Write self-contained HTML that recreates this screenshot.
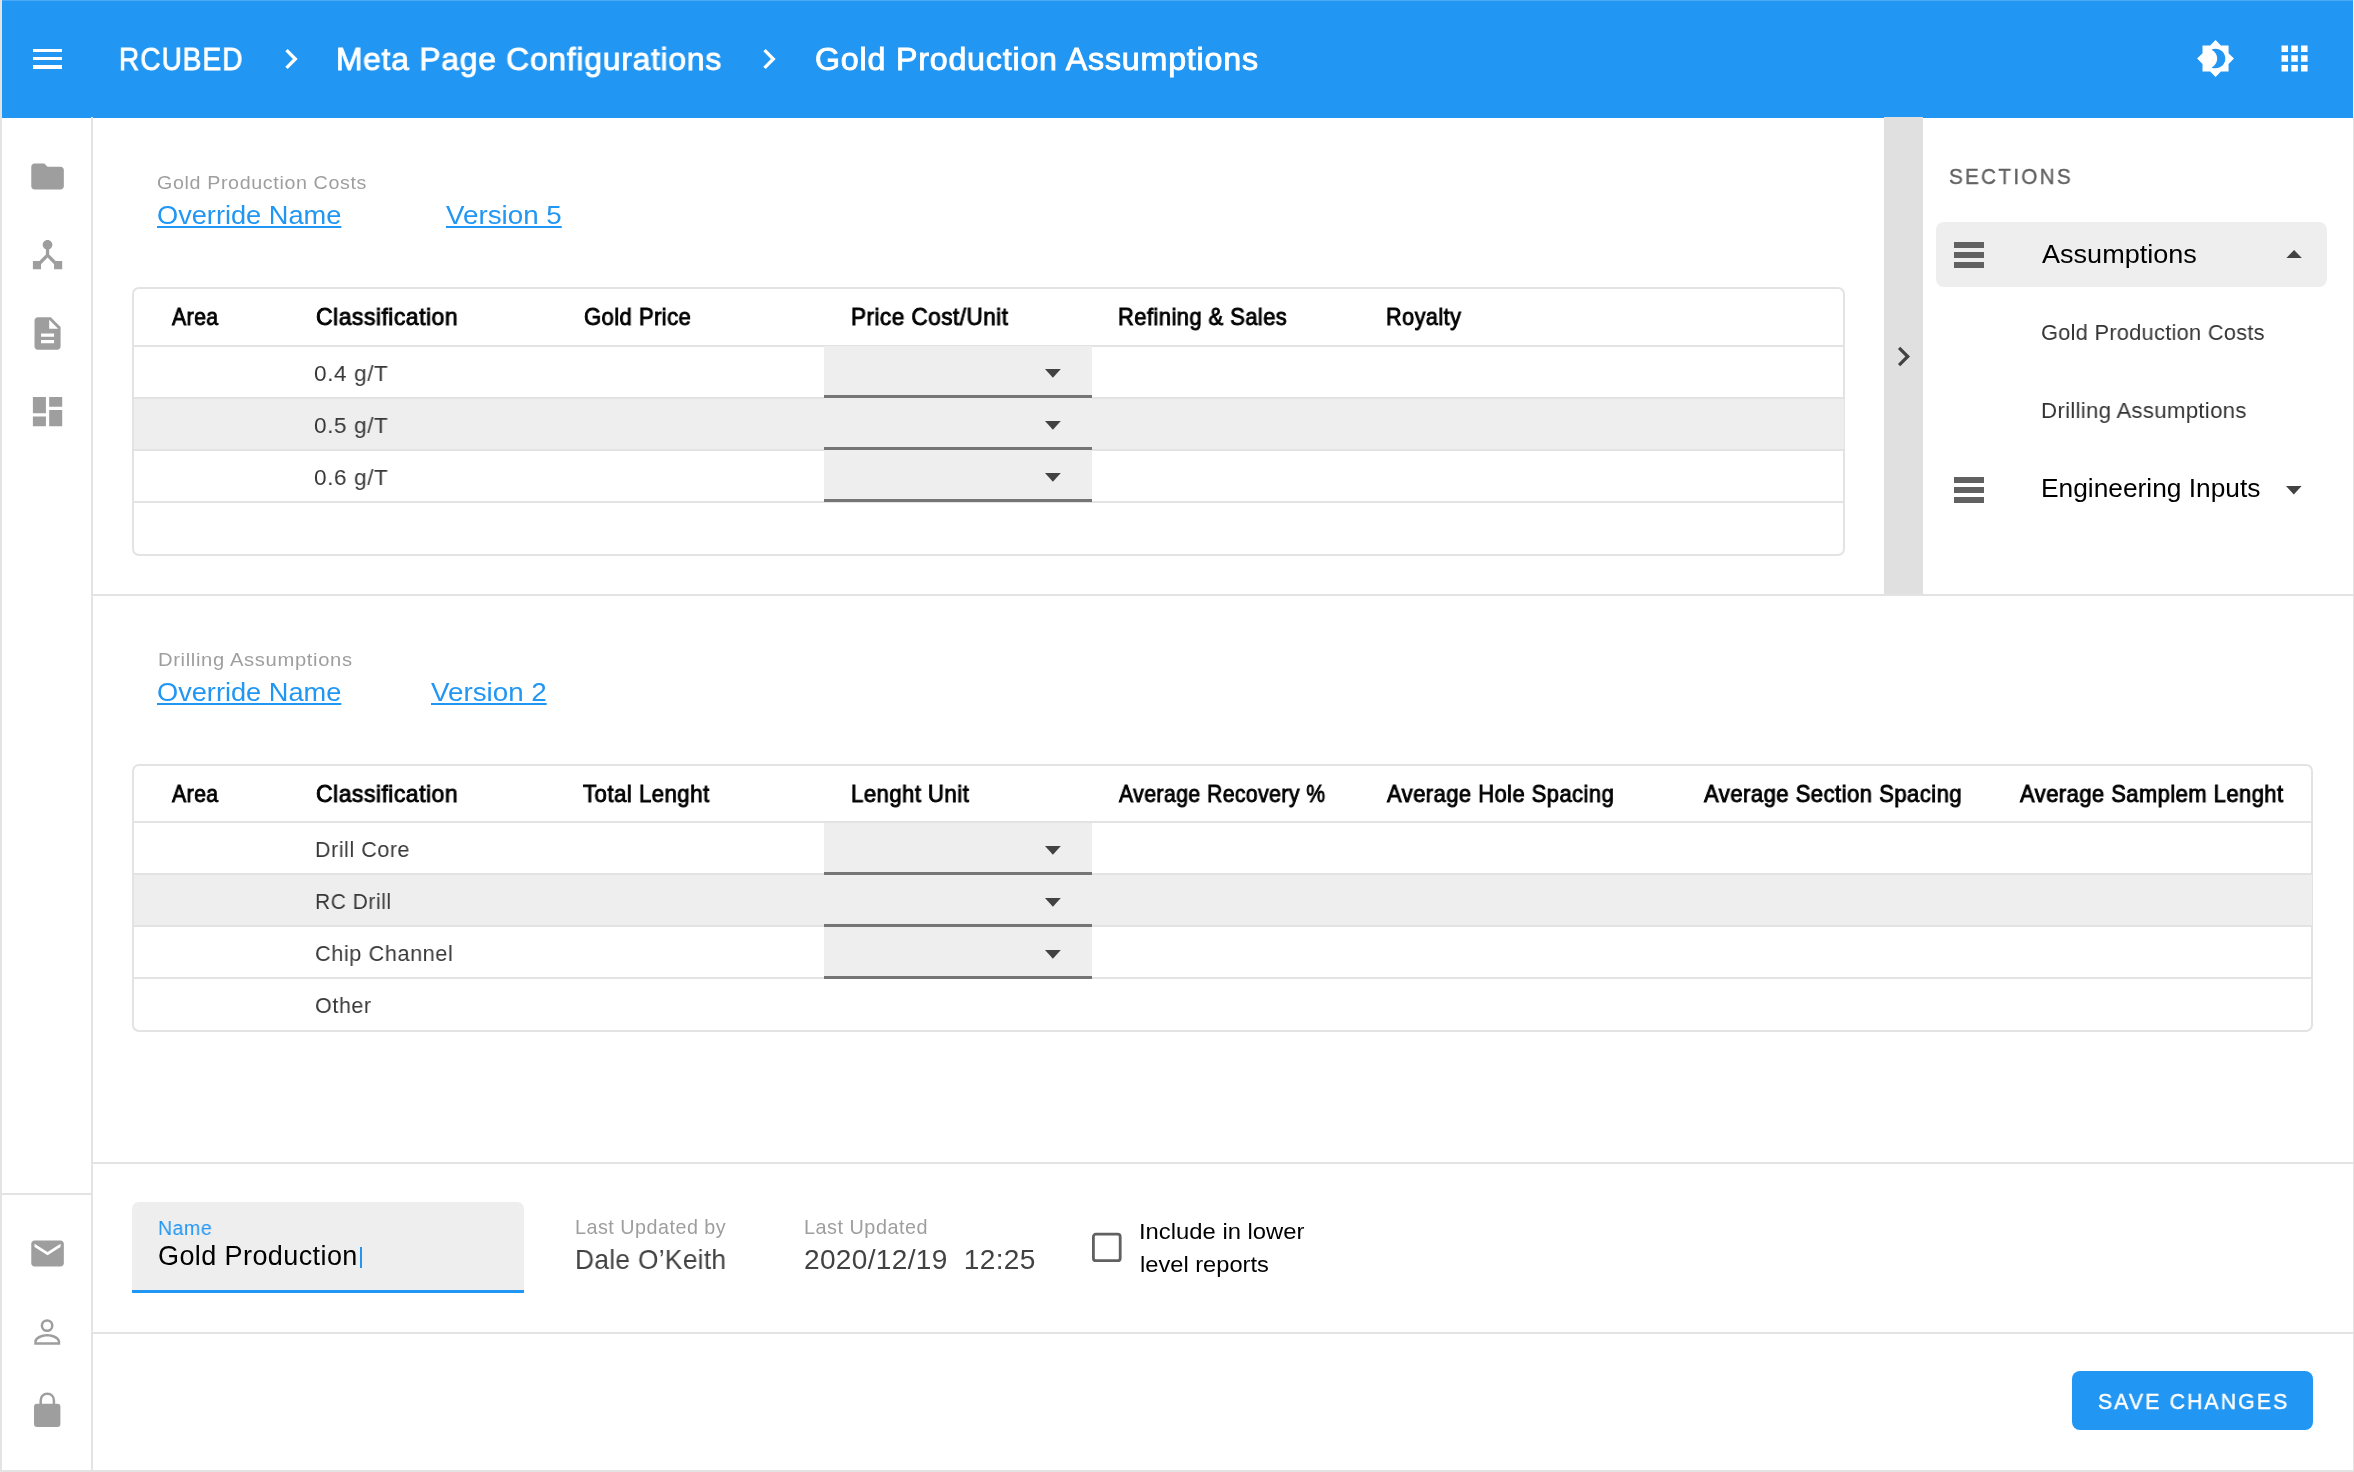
<!DOCTYPE html>
<html><head><meta charset="utf-8"><title>Gold Production Assumptions</title>
<style>
html,body{margin:0;padding:0;width:2354px;height:1472px;overflow:hidden;background:#fff;}
body{position:relative;font-family:"Liberation Sans",sans-serif;}
.t{position:absolute;white-space:nowrap;line-height:1;transform-origin:0 0;will-change:transform;}
.r{position:absolute;display:block;}
</style></head><body>
<div class="r" style="left:0px;top:0px;width:2353px;height:117.5px;background:#2196f3;"></div>
<div class="r" style="left:0px;top:0px;width:2353px;height:1px;background:#4ba9f5;"></div>
<div class="r" style="left:0px;top:0px;width:1.7px;height:1472px;background:#e3e3e3;"></div>
<div class="r" style="left:2352.6px;top:117px;width:1.4px;height:1355px;background:#e3e3e3;"></div>
<div class="r" style="left:0px;top:1470.3px;width:2354px;height:1.7px;background:#e3e3e3;"></div>
<div class="r" style="left:32.8px;top:49.0px;width:29.2px;height:3.4px;background:#fff;"></div>
<div class="r" style="left:32.8px;top:57.1px;width:29.2px;height:3.4px;background:#fff;"></div>
<div class="r" style="left:32.8px;top:65.2px;width:29.2px;height:3.4px;background:#fff;"></div>
<div class="t" style="left:118.99px;top:43.04px;font-size:32.20px;color:#fff;font-weight:400;letter-spacing:1.2px;-webkit-text-stroke:0.9px #fff;transform:scaleX(0.8694);">RCUBED</div>
<div class="t" style="left:335.98px;top:43.04px;font-size:32.20px;color:#fff;font-weight:400;letter-spacing:0.8px;-webkit-text-stroke:0.9px #fff;transform:scaleX(0.9863);">Meta Page Configurations</div>
<div class="t" style="left:814.71px;top:43.04px;font-size:32.20px;color:#fff;font-weight:400;letter-spacing:0.8px;-webkit-text-stroke:0.9px #fff;">Gold Production Assumptions</div>
<svg class="r" style="left:270.7px;top:39.0px" width="40.0" height="40.0" viewBox="0 0 24 24"><path fill="#fff" d="M10 6L8.59 7.41 13.17 12l-4.58 4.59L10 18l6-6z"/></svg>
<svg class="r" style="left:748.7px;top:39.0px" width="40.0" height="40.0" viewBox="0 0 24 24"><path fill="#fff" d="M10 6L8.59 7.41 13.17 12l-4.58 4.59L10 18l6-6z"/></svg>
<svg class="r" style="left:2195.9px;top:39.3px" width="39.1" height="39.1" viewBox="0 0 24 24"><path fill="#fff" d="M20 8.69V4h-4.69L12 .69 8.69 4H4v4.69L.69 12 4 15.31V20h4.69L12 23.31 15.31 20H20v-4.69L23.31 12 20 8.69zM12 18c-.89 0-1.74-.2-2.5-.55C11.56 16.5 13 14.42 13 12s-1.44-4.5-3.5-5.45C10.26 6.2 11.11 6 12 6c3.31 0 6 2.69 6 6s-2.69 6-6 6z"/></svg>
<svg class="r" style="left:2274.5px;top:39.3px" width="39.1" height="39.1" viewBox="0 0 24 24"><path fill="#fff" d="M4 8h4V4H4v4zm6 12h4v-4h-4v4zm-6 0h4v-4H4v4zm0-6h4v-4H4v4zm6 0h4v-4h-4v4zm6-10v4h4V4h-4zm-6 4h4V4h-4v4zm6 6h4v-4h-4v4zm0 6h4v-4h-4v4z"/></svg>
<div class="r" style="left:91.2px;top:117px;width:1.8px;height:1353px;background:#e3e3e3;"></div>
<div class="r" style="left:1.7px;top:1193.2px;width:89.5px;height:2px;background:#e3e3e3;"></div>
<svg class="r" style="left:27.7px;top:156.5px" width="39.1" height="39.1" viewBox="0 0 24 24"><path fill="#9e9e9e" d="M10 4H4c-1.1 0-1.99.9-1.99 2L2 18c0 1.1.9 2 2 2h16c1.1 0 2-.9 2-2V8c0-1.1-.9-2-2-2h-8l-2-2z"/></svg>
<svg class="r" style="left:27.7px;top:235.1px" width="39.1" height="39.1" viewBox="0 0 24 24"><path fill="#9e9e9e" d="M17 16l-4-4V8.82C14.16 8.4 15 7.3 15 6c0-1.66-1.34-3-3-3S9 4.34 9 6c0 1.3.84 2.4 2 2.82V12l-4 4H3v5h5v-3.05l4-4.2 4 4.2V21h5v-5h-4z"/></svg>
<svg class="r" style="left:27.5px;top:313.7px" width="39.1" height="39.1" viewBox="0 0 24 24"><path fill="#9e9e9e" d="M14 2H6c-1.1 0-1.99.9-1.99 2L4 20c0 1.1.89 2 1.99 2H18c1.1 0 2-.9 2-2V8l-6-6zm2 16H8v-2h8v2zm0-4H8v-2h8v2zm-3-5V3.5L18.5 9H13z"/></svg>
<svg class="r" style="left:27.7px;top:392.1px" width="39.1" height="39.1" viewBox="0 0 24 24"><path fill="#9e9e9e" d="M3 13h8V3H3v10zm0 8h8v-6H3v6zm10 0h8V11h-8v10zm0-18v6h8V3h-8z"/></svg>
<svg class="r" style="left:27.8px;top:1234.2px" width="39.1" height="39.1" viewBox="0 0 24 24"><path fill="#9e9e9e" d="M20 4H4c-1.1 0-1.99.9-1.99 2L2 18c0 1.1.9 2 2 2h16c1.1 0 2-.9 2-2V6c0-1.1-.9-2-2-2zm0 4l-8 5-8-5V6l8 5 8-5v2z"/></svg>
<svg class="r" style="left:30px;top:1315px" width="34" height="34" viewBox="0 0 34 34"><circle cx="17.1" cy="10.6" r="5.2" fill="none" stroke="#9e9e9e" stroke-width="2.5"/><path fill="#9e9e9e" fill-rule="evenodd" d="M4.3 29.8V26.5C4.3 22 11 19 17.2 19S30.2 22 30.2 26.5V29.8Z M6.8 27.3V26.6C6.8 24.2 12 21.5 17.2 21.5S27.7 24.2 27.7 26.6V27.3Z"/></svg>
<svg class="r" style="left:30px;top:1388px" width="34" height="42" viewBox="0 0 34 42"><path d="M10.7 16.5V12.6C10.7 8.3 13.5 5.85 17.3 5.85S23.9 8.3 23.9 12.6V16.5" fill="none" stroke="#9e9e9e" stroke-width="2.5"/><rect x="4" y="15.7" width="26.4" height="23.2" rx="3" fill="#9e9e9e"/></svg>
<div class="r" style="left:93px;top:593.8px;width:2260px;height:1.9px;background:#e3e3e3;"></div>
<div class="r" style="left:93px;top:1162.2px;width:2260px;height:1.9px;background:#e3e3e3;"></div>
<div class="r" style="left:93px;top:1332.3px;width:2260px;height:1.9px;background:#e3e3e3;"></div>
<div class="r" style="left:1884px;top:117px;width:39px;height:477px;background:#e0e0e0;"></div>
<svg class="r" style="left:1884.0px;top:336.8px" width="39.0" height="39.0" viewBox="0 0 24 24"><path fill="#424242" d="M10 6L8.59 7.41 13.17 12l-4.58 4.59L10 18l6-6z"/></svg>
<div class="t" style="left:1949.47px;top:165.72px;font-size:21.60px;color:#616161;font-weight:400;letter-spacing:2.4px;-webkit-text-stroke:0.35px #616161;transform:scaleX(0.9570);">SECTIONS</div>
<div class="r" style="left:1936px;top:222px;width:390.5px;height:65px;background:#eeeeee;border-radius:8px;"></div>
<div class="r" style="left:1954.3px;top:241.9px;width:29.5px;height:6px;background:#616161;"></div>
<div class="r" style="left:1954.3px;top:251.70000000000002px;width:29.5px;height:6px;background:#616161;"></div>
<div class="r" style="left:1954.3px;top:261.5px;width:29.5px;height:6px;background:#616161;"></div>
<div class="t" style="left:2041.92px;top:240.82px;font-size:26.21px;color:#000;font-weight:400;letter-spacing:0.0px;transform:scaleX(1.0324);">Assumptions</div>
<svg class="r" style="left:2285.8px;top:249.9px" width="16.2" height="8.4"><path fill="#424242" d="M0 8.4L8.1 0L16.2 8.4Z"/></svg>
<div class="t" style="left:2041.20px;top:321.57px;font-size:22.48px;color:#333333;font-weight:400;letter-spacing:0.3px;transform:scaleX(0.9687);">Gold Production Costs</div>
<div class="t" style="left:2041.24px;top:400.09px;font-size:22.34px;color:#333333;font-weight:400;letter-spacing:0.3px;transform:scaleX(0.9937);">Drilling Assumptions</div>
<div class="r" style="left:1954.3px;top:477px;width:29.5px;height:6px;background:#616161;"></div>
<div class="r" style="left:1954.3px;top:486.8px;width:29.5px;height:6px;background:#616161;"></div>
<div class="r" style="left:1954.3px;top:496.6px;width:29.5px;height:6px;background:#616161;"></div>
<div class="t" style="left:2040.50px;top:476.48px;font-size:25.66px;color:#000;font-weight:400;letter-spacing:0.0px;transform:scaleX(1.0255);">Engineering Inputs</div>
<svg class="r" style="left:2286.1px;top:486.4px" width="15.6" height="8.4"><path fill="#424242" d="M0 0L7.8 8.4L15.6 0Z"/></svg>
<div class="t" style="left:157.36px;top:173.84px;font-size:18.62px;color:#9e9e9e;font-weight:400;letter-spacing:0.6px;transform:scaleX(1.0567);">Gold Production Costs</div>
<div class="t" style="left:157.36px;top:201.58px;font-size:26.48px;color:#2196f3;font-weight:400;letter-spacing:0.0px;transform:scaleX(1.0271);text-decoration:underline;text-decoration-thickness:1.7px;text-underline-offset:2.3px;">Override Name</div>
<div class="t" style="left:446.00px;top:201.58px;font-size:26.48px;color:#2196f3;font-weight:400;letter-spacing:0.0px;transform:scaleX(1.0486);text-decoration:underline;text-decoration-thickness:1.7px;text-underline-offset:2.3px;">Version 5</div>
<div class="r" style="left:132px;top:287.4px;width:1713px;height:268.2px;border:2px solid #e3e3e3;box-sizing:border-box;border-radius:7px;"></div>
<div class="r" style="left:134px;top:397.6px;width:1710px;height:52.0px;background:#eeeeee;"></div>
<div class="r" style="left:134px;top:344.6px;width:1710px;height:2px;background:#e3e3e3;"></div>
<div class="r" style="left:134px;top:396.6px;width:1710px;height:2px;background:#e3e3e3;"></div>
<div class="r" style="left:134px;top:448.6px;width:1710px;height:2px;background:#e3e3e3;"></div>
<div class="r" style="left:134px;top:500.6px;width:1710px;height:2px;background:#e3e3e3;"></div>
<div class="t" style="left:171.59px;top:306.06px;font-size:23.20px;color:#000;font-weight:400;letter-spacing:0.5px;-webkit-text-stroke:0.9px #000;transform:scaleX(0.9138);">Area</div>
<div class="t" style="left:315.61px;top:306.06px;font-size:23.20px;color:#000;font-weight:400;letter-spacing:0.5px;-webkit-text-stroke:0.9px #000;transform:scaleX(0.9893);">Classification</div>
<div class="t" style="left:583.51px;top:306.06px;font-size:23.20px;color:#000;font-weight:400;letter-spacing:0.5px;-webkit-text-stroke:0.9px #000;transform:scaleX(0.9475);">Gold Price</div>
<div class="t" style="left:850.70px;top:306.06px;font-size:23.20px;color:#000;font-weight:400;letter-spacing:0.5px;-webkit-text-stroke:0.9px #000;transform:scaleX(0.9706);">Price Cost/Unit</div>
<div class="t" style="left:1117.74px;top:306.06px;font-size:23.20px;color:#000;font-weight:400;letter-spacing:0.5px;-webkit-text-stroke:0.9px #000;transform:scaleX(0.9432);">Refining &amp; Sales</div>
<div class="t" style="left:1385.72px;top:306.06px;font-size:23.20px;color:#000;font-weight:400;letter-spacing:0.5px;-webkit-text-stroke:0.9px #000;transform:scaleX(0.9327);">Royalty</div>
<div class="t" style="left:314.36px;top:361.78px;font-size:22.70px;color:#383838;font-weight:400;letter-spacing:0.6px;transform:scaleX(0.9942);">0.4 g/T</div>
<div class="t" style="left:314.36px;top:413.78px;font-size:22.70px;color:#383838;font-weight:400;letter-spacing:0.6px;transform:scaleX(0.9942);">0.5 g/T</div>
<div class="t" style="left:314.36px;top:465.78px;font-size:22.70px;color:#383838;font-weight:400;letter-spacing:0.6px;transform:scaleX(0.9942);">0.6 g/T</div>
<div class="r" style="left:824.3px;top:345.9px;width:267.7px;height:49.4px;background:#eeeeee;"></div>
<div class="r" style="left:824.3px;top:395.3px;width:267.7px;height:3.1px;background:#757575;"></div>
<svg class="r" style="left:1045.4px;top:369.4px" width="15.8" height="8.7"><path fill="#424242" d="M0 0L7.9 8.7L15.8 0Z"/></svg>
<div class="r" style="left:824.3px;top:397.9px;width:267.7px;height:49.4px;background:#eeeeee;"></div>
<div class="r" style="left:824.3px;top:447.3px;width:267.7px;height:3.1px;background:#757575;"></div>
<svg class="r" style="left:1045.4px;top:421.4px" width="15.8" height="8.7"><path fill="#424242" d="M0 0L7.9 8.7L15.8 0Z"/></svg>
<div class="r" style="left:824.3px;top:449.9px;width:267.7px;height:49.4px;background:#eeeeee;"></div>
<div class="r" style="left:824.3px;top:499.3px;width:267.7px;height:3.1px;background:#757575;"></div>
<svg class="r" style="left:1045.4px;top:473.4px" width="15.8" height="8.7"><path fill="#424242" d="M0 0L7.9 8.7L15.8 0Z"/></svg>
<div class="t" style="left:157.75px;top:650.84px;font-size:18.62px;color:#9e9e9e;font-weight:400;letter-spacing:0.6px;transform:scaleX(1.0839);">Drilling Assumptions</div>
<div class="t" style="left:157.36px;top:678.58px;font-size:26.48px;color:#2196f3;font-weight:400;letter-spacing:0.0px;transform:scaleX(1.0271);text-decoration:underline;text-decoration-thickness:1.7px;text-underline-offset:2.3px;">Override Name</div>
<div class="t" style="left:431.00px;top:678.58px;font-size:26.48px;color:#2196f3;font-weight:400;letter-spacing:0.0px;transform:scaleX(1.0486);text-decoration:underline;text-decoration-thickness:1.7px;text-underline-offset:2.3px;">Version 2</div>
<div class="r" style="left:132px;top:764px;width:2181px;height:268.2px;border:2px solid #e3e3e3;box-sizing:border-box;border-radius:7px;"></div>
<div class="r" style="left:134px;top:874.2px;width:2178px;height:52.0px;background:#eeeeee;"></div>
<div class="r" style="left:134px;top:821.2px;width:2178px;height:2px;background:#e3e3e3;"></div>
<div class="r" style="left:134px;top:873.2px;width:2178px;height:2px;background:#e3e3e3;"></div>
<div class="r" style="left:134px;top:925.2px;width:2178px;height:2px;background:#e3e3e3;"></div>
<div class="r" style="left:134px;top:977.2px;width:2178px;height:2px;background:#e3e3e3;"></div>
<div class="t" style="left:171.59px;top:782.96px;font-size:23.20px;color:#000;font-weight:400;letter-spacing:0.5px;-webkit-text-stroke:0.9px #000;transform:scaleX(0.9138);">Area</div>
<div class="t" style="left:315.61px;top:782.96px;font-size:23.20px;color:#000;font-weight:400;letter-spacing:0.5px;-webkit-text-stroke:0.9px #000;transform:scaleX(0.9893);">Classification</div>
<div class="t" style="left:583.47px;top:782.96px;font-size:23.20px;color:#000;font-weight:400;letter-spacing:0.5px;-webkit-text-stroke:0.9px #000;transform:scaleX(0.9568);">Total Lenght</div>
<div class="t" style="left:850.69px;top:782.96px;font-size:23.20px;color:#000;font-weight:400;letter-spacing:0.5px;-webkit-text-stroke:0.9px #000;transform:scaleX(0.9529);">Lenght Unit</div>
<div class="t" style="left:1119.43px;top:782.96px;font-size:23.20px;color:#000;font-weight:400;letter-spacing:0.5px;-webkit-text-stroke:0.9px #000;transform:scaleX(0.9123);">Average Recovery %</div>
<div class="t" style="left:1386.59px;top:782.96px;font-size:23.20px;color:#000;font-weight:400;letter-spacing:0.5px;-webkit-text-stroke:0.9px #000;transform:scaleX(0.9453);">Average Hole Spacing</div>
<div class="t" style="left:1703.55px;top:782.96px;font-size:23.20px;color:#000;font-weight:400;letter-spacing:0.5px;-webkit-text-stroke:0.9px #000;transform:scaleX(0.9506);">Average Section Spacing</div>
<div class="t" style="left:2020.49px;top:782.96px;font-size:23.20px;color:#000;font-weight:400;letter-spacing:0.5px;-webkit-text-stroke:0.9px #000;transform:scaleX(0.9458);">Average Samplem Lenght</div>
<div class="t" style="left:314.68px;top:838.38px;font-size:22.70px;color:#383838;font-weight:400;letter-spacing:0.6px;transform:scaleX(0.9447);">Drill Core</div>
<div class="t" style="left:314.68px;top:890.38px;font-size:22.70px;color:#383838;font-weight:400;letter-spacing:0.6px;transform:scaleX(0.9238);">RC Drill</div>
<div class="t" style="left:314.68px;top:942.38px;font-size:22.70px;color:#383838;font-weight:400;letter-spacing:0.6px;transform:scaleX(0.9564);">Chip Channel</div>
<div class="t" style="left:314.68px;top:994.38px;font-size:22.70px;color:#383838;font-weight:400;letter-spacing:0.6px;transform:scaleX(0.9496);">Other</div>
<div class="r" style="left:824.3px;top:822.5px;width:267.7px;height:49.4px;background:#eeeeee;"></div>
<div class="r" style="left:824.3px;top:871.9px;width:267.7px;height:3.1px;background:#757575;"></div>
<svg class="r" style="left:1045.4px;top:846.0px" width="15.8" height="8.7"><path fill="#424242" d="M0 0L7.9 8.7L15.8 0Z"/></svg>
<div class="r" style="left:824.3px;top:874.5px;width:267.7px;height:49.4px;background:#eeeeee;"></div>
<div class="r" style="left:824.3px;top:923.9px;width:267.7px;height:3.1px;background:#757575;"></div>
<svg class="r" style="left:1045.4px;top:898.0px" width="15.8" height="8.7"><path fill="#424242" d="M0 0L7.9 8.7L15.8 0Z"/></svg>
<div class="r" style="left:824.3px;top:926.5px;width:267.7px;height:49.4px;background:#eeeeee;"></div>
<div class="r" style="left:824.3px;top:975.9px;width:267.7px;height:3.1px;background:#757575;"></div>
<svg class="r" style="left:1045.4px;top:950.0px" width="15.8" height="8.7"><path fill="#424242" d="M0 0L7.9 8.7L15.8 0Z"/></svg>
<div class="r" style="left:132px;top:1202px;width:392px;height:91px;background:#eeeeee;border-radius:7px 7px 0 0;"></div>
<div class="r" style="left:132px;top:1290px;width:392px;height:3px;background:#2196f3;"></div>
<div class="t" style="left:158.30px;top:1217.59px;font-size:20.22px;color:#2196f3;font-weight:400;letter-spacing:0.5px;transform:scaleX(0.9691);">Name</div>
<div class="t" style="left:158.20px;top:1242.73px;font-size:26.90px;color:#000;font-weight:400;letter-spacing:0.4px;transform:scaleX(1.0046);">Gold Production</div>
<div class="r" style="left:360.2px;top:1247.3px;width:2px;height:21.2px;background:#2196f3;"></div>
<div class="t" style="left:575.32px;top:1218.42px;font-size:19.59px;color:#9e9e9e;font-weight:400;letter-spacing:0.5px;transform:scaleX(1.0075);">Last Updated by</div>
<div class="t" style="left:574.52px;top:1246.38px;font-size:27.31px;color:#424242;font-weight:400;letter-spacing:0.3px;transform:scaleX(0.9652);">Dale O’Keith</div>
<div class="t" style="left:804.28px;top:1218.42px;font-size:19.59px;color:#9e9e9e;font-weight:400;letter-spacing:0.5px;transform:scaleX(1.0128);">Last Updated</div>
<div class="t" style="left:804.28px;top:1246.38px;font-size:27.31px;color:#424242;font-weight:400;letter-spacing:0.3px;transform:scaleX(1.0287);">2020/12/19&nbsp;&nbsp;12:25</div>
<svg class="r" style="left:1088px;top:1229px" width="38" height="38"><rect x="5.4" y="5.2" width="26.8" height="26.5" rx="2.5" fill="none" stroke="#616161" stroke-width="2.8"/></svg>
<div class="t" style="left:1139.40px;top:1220.50px;font-size:22.21px;color:#000;font-weight:400;letter-spacing:0.0px;transform:scaleX(1.0724);">Include in lower</div>
<div class="t" style="left:1140.20px;top:1253.90px;font-size:22.21px;color:#000;font-weight:400;letter-spacing:0.0px;transform:scaleX(1.0657);">level reports</div>
<div class="r" style="left:2072px;top:1371.4px;width:241px;height:58.8px;background:#2196f3;border-radius:8px;"></div>
<div class="t" style="left:2097.54px;top:1391.38px;font-size:22.00px;color:#fff;font-weight:400;letter-spacing:2.2px;-webkit-text-stroke:0.45px #fff;transform:scaleX(0.9649);">SAVE CHANGES</div>
</body></html>
